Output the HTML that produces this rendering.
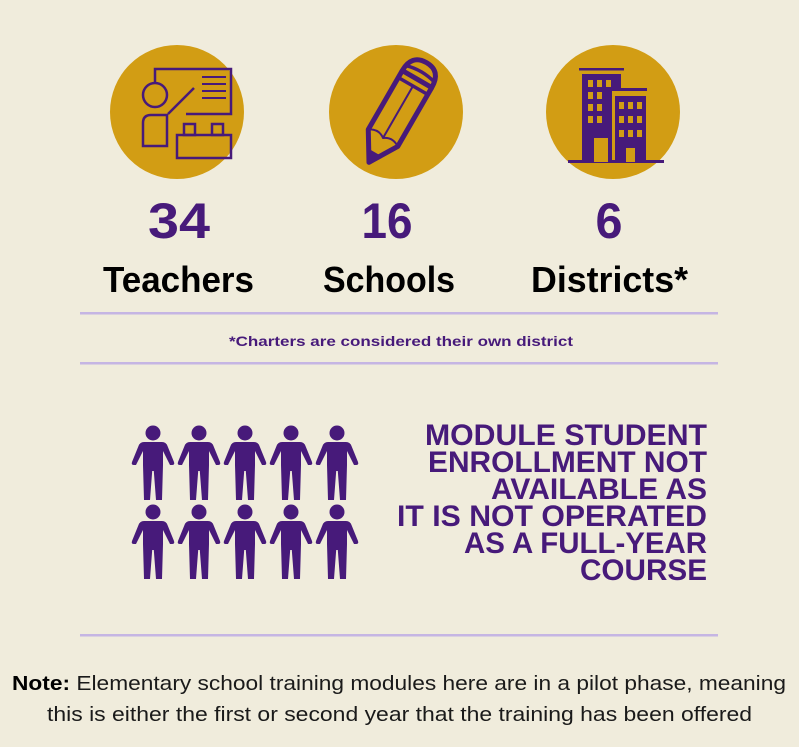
<!DOCTYPE html>
<html><head><meta charset="utf-8"><style>
html,body{margin:0;padding:0;background:#f0ecdc;}
svg{display:block}
</style></head><body>
<svg width="799" height="747" viewBox="0 0 799 747" xmlns="http://www.w3.org/2000/svg" font-family="Liberation Sans, sans-serif">
<defs>
<g id="p">
<circle cx="0" cy="8" r="7.5"/>
<path d="M-9,17 L9,17 Q13,17 14.5,21 L21,37 Q22,40 19,40 L17,40 L10,26 L10,40 L9,75 L3,75 L0.8,46 L-0.8,46 L-3,75 L-9,75 L-10,40 L-10,26 L-17,40 L-19,40 Q-22,40 -21,37 L-14.5,21 Q-13,17 -9,17 Z"/>
</g>
</defs>
<rect width="799" height="747" fill="#f0ecdc"/>
<circle cx="177" cy="112" r="67" fill="#d29d14"/>
<circle cx="396" cy="112" r="67" fill="#d29d14"/>
<circle cx="613" cy="112" r="67" fill="#d29d14"/>
<g fill="none" stroke="#471a7a" stroke-width="2.5">
<path d="M155,83 L155,69 L231,69 L231,114 L186,114"/>
<circle cx="155" cy="95" r="12"/>
<path d="M202,77h24M202,84h24M202,91h24M202,98h24" stroke-width="2"/>
<path d="M168,114 L194,88"/>
<path d="M143,146 L143,123 Q143,115 151,115 L167,115 L167,146 Z"/>
<rect x="177" y="135" width="54" height="23"/>
<rect x="184" y="124" width="11" height="11"/>
<rect x="212" y="124" width="11" height="11"/>
</g>
<g transform="translate(398,112) rotate(30)" fill="none" stroke="#471a7a" stroke-width="5" stroke-linejoin="round">
<path d="M-17,-38 L-17,30 L0,58 L17,30 L17,-38"/>
<path d="M-17,-38 Q-17,-57 0,-57 Q17,-57 17,-38 Z"/>
<path d="M-17,-30 L17,-30 M-17,-44 Q0,-49 17,-44" stroke-width="3.5"/>
<path d="M-17,30 Q-8,24 0,30 Q8,24 17,30 M0,-30 L0,30" stroke-width="2"/>
<path d="M-5,49 L0,58 L5,49 Z" fill="#471a7a"/>
</g>
<g fill="#471a7a">
<rect x="579" y="68" width="45" height="2.5"/>
<path d="M582,74 L621,74 L621,89 L612,89 L612,162 L582,162 Z"/>
<rect x="612" y="88" width="35" height="3"/>
<rect x="615" y="96" width="31" height="66"/>
<rect x="568" y="160" width="96" height="3"/>
</g>
<g fill="#d29d14">
<rect x="588" y="80" width="5" height="7"/><rect x="597" y="80" width="5" height="7"/><rect x="606" y="80" width="5" height="7"/>
<rect x="588" y="92" width="5" height="7"/><rect x="597" y="92" width="5" height="7"/>
<rect x="588" y="104" width="5" height="7"/><rect x="597" y="104" width="5" height="7"/>
<rect x="588" y="116" width="5" height="7"/><rect x="597" y="116" width="5" height="7"/>
<rect x="594" y="138" width="14" height="24"/>
<rect x="619" y="102" width="5" height="7"/><rect x="628" y="102" width="5" height="7"/><rect x="637" y="102" width="5" height="7"/>
<rect x="619" y="116" width="5" height="7"/><rect x="628" y="116" width="5" height="7"/><rect x="637" y="116" width="5" height="7"/>
<rect x="619" y="130" width="5" height="7"/><rect x="628" y="130" width="5" height="7"/><rect x="637" y="130" width="5" height="7"/>
<rect x="626" y="148" width="9" height="14"/>
</g>
<g fill="#471a7a" font-weight="bold" font-size="50" text-anchor="middle">
<text x="179" y="238" textLength="62" lengthAdjust="spacingAndGlyphs">34</text>
<text x="387" y="238" textLength="51" lengthAdjust="spacingAndGlyphs">16</text>
<text x="609" y="238" textLength="27" lengthAdjust="spacingAndGlyphs">6</text>
</g>
<g fill="#000" font-weight="bold" font-size="36">
<text x="103" y="292" textLength="151" lengthAdjust="spacingAndGlyphs">Teachers</text>
<text x="323" y="292" textLength="132" lengthAdjust="spacingAndGlyphs">Schools</text>
<text x="531" y="292" textLength="157" lengthAdjust="spacingAndGlyphs">Districts*</text>
</g>
<g fill="#c5b5e3">
<rect x="80" y="312" width="638" height="2.5"/>
<rect x="80" y="362" width="638" height="2.5"/>
<rect x="80" y="634" width="638" height="2.5"/>
</g>
<text x="229" y="346" fill="#471a7a" font-weight="bold" font-size="14" textLength="344" lengthAdjust="spacingAndGlyphs">*Charters are considered their own district</text>
<g fill="#471a7a">
<use href="#p" x="153" y="425"/><use href="#p" x="199" y="425"/><use href="#p" x="245" y="425"/><use href="#p" x="291" y="425"/><use href="#p" x="337" y="425"/>
<use href="#p" x="153" y="504"/><use href="#p" x="199" y="504"/><use href="#p" x="245" y="504"/><use href="#p" x="291" y="504"/><use href="#p" x="337" y="504"/>
</g>
<g fill="#471a7a" font-weight="bold" font-size="30">
<text x="425" y="445" textLength="282" lengthAdjust="spacingAndGlyphs">MODULE STUDENT</text>
<text x="428" y="472" textLength="279" lengthAdjust="spacingAndGlyphs">ENROLLMENT NOT</text>
<text x="491" y="499" textLength="216" lengthAdjust="spacingAndGlyphs">AVAILABLE AS</text>
<text x="397" y="526" textLength="310" lengthAdjust="spacingAndGlyphs">IT IS NOT OPERATED</text>
<text x="464" y="553" textLength="243" lengthAdjust="spacingAndGlyphs">AS A FULL-YEAR</text>
<text x="580" y="580" textLength="127" lengthAdjust="spacingAndGlyphs">COURSE</text>
</g>
<g fill="#1a1a1a" font-size="20">
<text x="12" y="690" textLength="774" lengthAdjust="spacingAndGlyphs"><tspan font-weight="bold" fill="#000">Note:</tspan> Elementary school training modules here are in a pilot phase, meaning</text>
<text x="47" y="721" textLength="705" lengthAdjust="spacingAndGlyphs">this is either the first or second year that the training has been offered</text>
</g>
</svg>
</body></html>
